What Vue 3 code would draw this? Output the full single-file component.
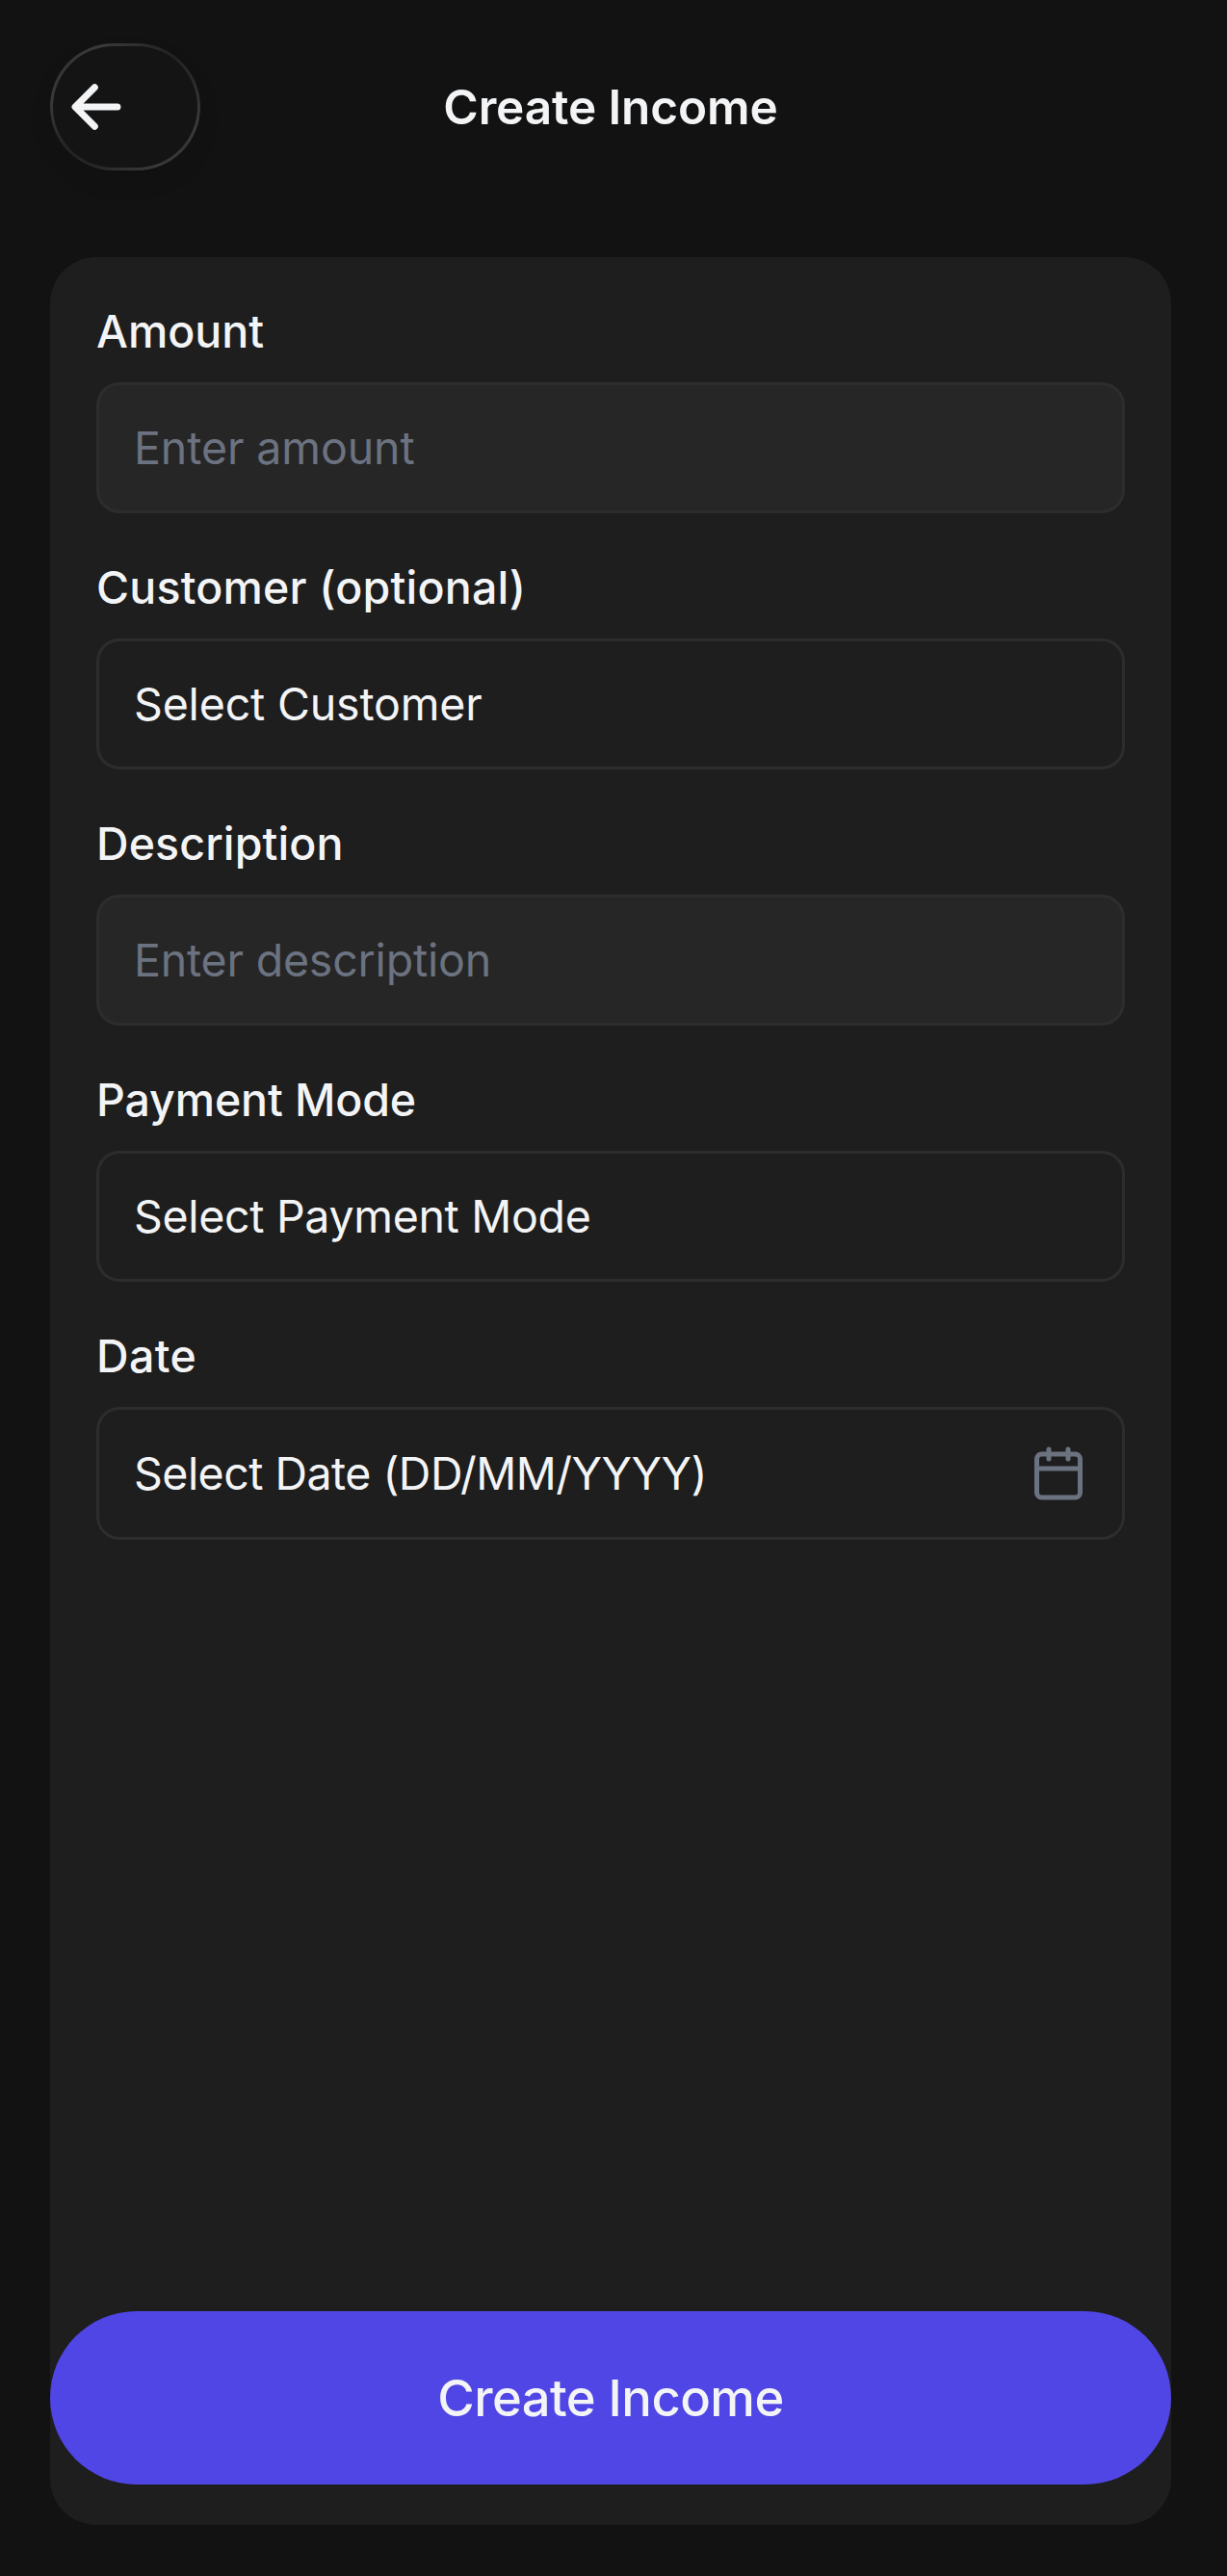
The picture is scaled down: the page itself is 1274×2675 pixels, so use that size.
<script setup>
const fields = [
  { id: 'amount', label: 'Amount', text: 'Enter amount', kind: 'input' },
  { id: 'customer', label: 'Customer (optional)', text: 'Select Customer', kind: 'select' },
  { id: 'description', label: 'Description', text: 'Enter description', kind: 'input' },
  { id: 'payment', label: 'Payment Mode', text: 'Select Payment Mode', kind: 'select' },
  { id: 'date', label: 'Date', text: 'Select Date (DD/MM/YYYY)', kind: 'date' },
]
</script>

<template>
  <div class="screen">
    <header class="header">
      <button class="back" type="button" aria-label="Back">
        <svg class="back-icon" viewBox="0 0 512 512" fill="none" stroke="currentColor" stroke-width="50" stroke-linecap="round" stroke-linejoin="round">
          <path d="M244 400L100 256l144-144M120 256h292" />
        </svg>
      </button>
      <h1 class="title">Create Income</h1>
      <div class="spacer"></div>
    </header>

    <main class="card">
      <div v-for="field in fields" :key="field.id" class="field">
        <div class="label"><span :class="'label-' + field.id">{{ field.label }}</span></div>
        <div class="control" :class="field.kind">
          <span :class="'text-' + field.id">{{ field.text }}</span>
          <svg v-if="field.kind === 'date'" class="calendar" viewBox="0 0 24 24" fill="none" stroke="currentColor" stroke-width="2" stroke-linecap="round" stroke-linejoin="round">
            <rect x="3" y="4" width="18" height="18" rx="2" />
            <path d="M16 2v4M8 2v4M3 10h18" />
          </svg>
        </div>
      </div>
      <button class="submit" type="button">Create Income</button>
    </main>
  </div>
</template>

<style>
body {
  margin: 0;
  background: #121212;
}
</style>

<style scoped>
.screen {
  box-sizing: border-box;
  width: 1274px;
  height: 2675px;
  padding: 45px 58px 53px 52px;
  display: flex;
  flex-direction: column;
  gap: 90px;
  background: #121212;
  color: #f3f4f6;
  font-family: Inter, "Liberation Sans", sans-serif;
}

.header {
  display: flex;
  align-items: center;
  justify-content: space-between;
  height: 132px;
}

.back {
  box-sizing: border-box;
  display: flex;
  align-items: center;
  width: 156px;
  height: 132px;
  padding: 0 9px;
  border: 3px solid transparent;
  border-radius: 66px;
  background:
    linear-gradient(#141414, #141414) padding-box,
    linear-gradient(135deg, #2c2c2c 0%, #3a3a3a 20%, #2a2a2a 36%, #222222 50%, #2a2a2a 64%, #3a3a3a 82%, #2c2c2c 100%) border-box;
  box-shadow: 0 12px 24px rgba(0, 0, 0, 0.08);
  color: #f3f4f6;
}

.back-icon {
  width: 72px;
  height: 72px;
}

.title {
  margin: 0;
  font-size: 49.5px;
  line-height: 62px;
  font-weight: 600;
  letter-spacing: -0.1px;
}

.spacer {
  width: 156px;
}

.card {
  box-sizing: border-box;
  flex: 1;
  display: flex;
  flex-direction: column;
  gap: 48px;
  padding: 48px 0 42px;
  border-radius: 48px;
  background: #1e1e1e;
}

.field {
  display: flex;
  flex-direction: column;
  gap: 23px;
  margin: 0 48px;
}

.label {
  font-size: 46.5px;
  line-height: 59px;
  font-weight: 500;
}

.control {
  box-sizing: border-box;
  display: flex;
  align-items: center;
  justify-content: space-between;
  height: 136px;
  padding: 0 36px;
  border: 3px solid #2d2d2d;
  border-radius: 24px;
  font-size: 46.5px;
  line-height: 57px;
  white-space: nowrap;
}

.input {
  background: #262626;
  color: #6b7280;
}

.date {
  height: 138px;
}

.label-customer { letter-spacing: 0.2px; }
.label-description { letter-spacing: 0.1px; }
.label-payment { letter-spacing: -0.12px; }
.label-date { letter-spacing: 0.4px; }
.text-amount { letter-spacing: -0.1px; }
.text-customer { letter-spacing: -0.17px; }
.text-description { letter-spacing: -0.2px; }
.text-payment { letter-spacing: -0.32px; }
.text-date { letter-spacing: -0.53px; }

.calendar {
  width: 60px;
  height: 60px;
  color: #6b7280;
}

.submit {
  display: flex;
  align-items: center;
  justify-content: center;
  height: 180px;
  margin-top: auto;
  padding: 0;
  border: 0;
  border-radius: 90px;
  background: #4f46e5;
  color: #f3f4f6;
  font-family: inherit;
  font-size: 52.5px;
  line-height: 64px;
  font-weight: 500;
  letter-spacing: -0.55px;
}
</style>
